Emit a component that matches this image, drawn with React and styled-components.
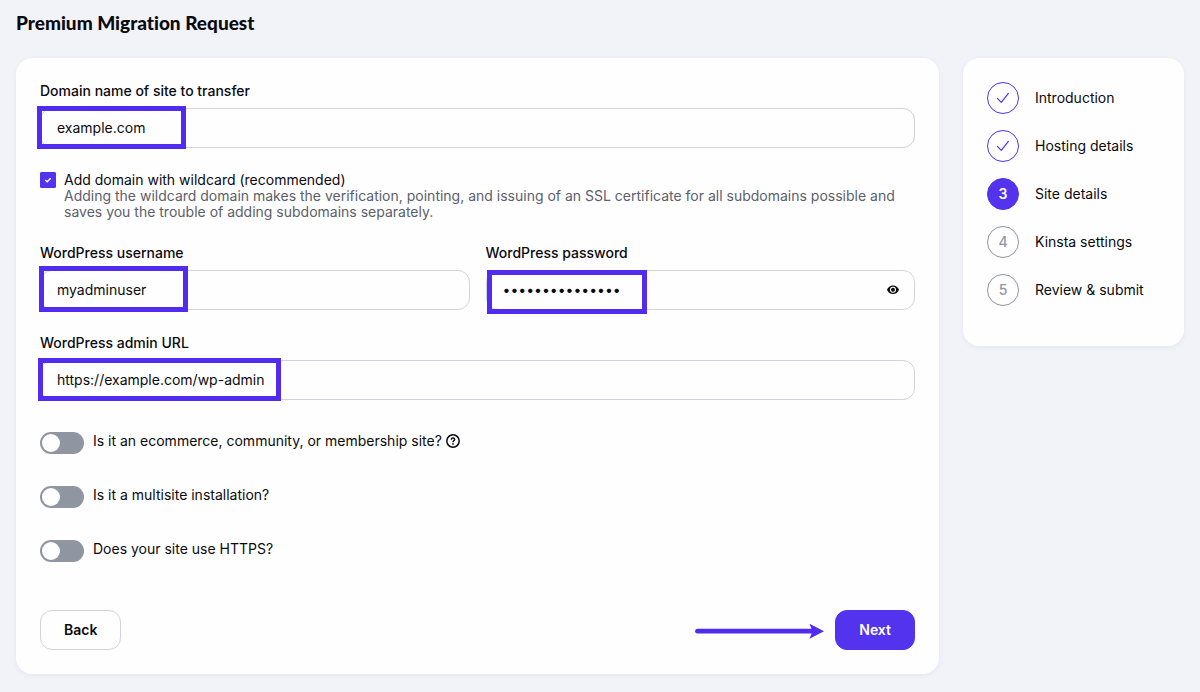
import { useState } from "react";
import styled, { createGlobalStyle } from "styled-components";

const GlobalStyle = createGlobalStyle`
  :root {
    --purple: #5333ed;
    --mark: #512bf0;
    --black: #0a0a0f;
    --grey-1: #5c5f6b;
    --grey-2: #9095a2;
    --border: #d0d3df;
    --body: 400 14px/16px Inter, "Liberation Sans", sans-serif;
    --body-medium: 500 14px/18px Inter, "Liberation Sans", sans-serif;
  }
  * {
    box-sizing: border-box;
  }
  body {
    margin: 0;
    min-height: 100vh;
    background-color: #f2f3f9;
    color: var(--black);
    font: var(--body);
  }
`;

const Page = styled.div`
  padding: 8px 16px 18px;
`;

const Title = styled.h1`
  margin: 0 0 20px;
  font: 900 19px/30px Lato, "Liberation Sans", sans-serif;
  font-variant-ligatures: none;
`;

const Columns = styled.div`
  display: grid;
  grid-template-columns: minmax(0, 1fr) 221px;
  align-items: start;
  gap: 24px;
`;

const Card = styled.section`
  padding: 24px;
  border-radius: 16px;
  background-color: #fefefe;
  box-shadow: 0 1px 4px rgba(60, 60, 120, 0.08);
`;

const Form = styled.form`
  display: flex;
  flex-direction: column;
  gap: 24px;
`;

const FieldRow = styled.div`
  display: grid;
  grid-template-columns: 1fr 1fr;
  gap: 16px;
`;

const FieldStyled = styled.div`
  display: flex;
  flex-direction: column;
  gap: 8px;
  .label {
    font: var(--body-medium);
  }
  .control {
    position: relative;
  }
`;

const Input = styled.input`
  display: block;
  width: 100%;
  height: 40px;
  padding: 0 16px 2px;
  border: 1px solid var(--border);
  border-radius: 12px;
  background-color: transparent;
  color: var(--black);
  font: var(--body);
  outline: none;
`;

const Mark = styled.span`
  position: absolute;
  top: ${({ $top }) => $top}px;
  left: ${({ $left }) => $left}px;
  width: ${({ $width }) => $width}px;
  height: ${({ $height }) => $height}px;
  border: 5px solid var(--mark);
  pointer-events: none;
`;

const EyeButton = styled.button`
  position: absolute;
  top: 12px;
  right: 14px;
  display: flex;
  padding: 0;
  border: none;
  background: none;
  color: var(--black);
`;

const CheckRow = styled.div`
  display: grid;
  grid-template-columns: 16px 1fr;
  column-gap: 8px;
  .box {
    position: relative;
    height: 16px;
  }
  .box input {
    appearance: none;
    display: block;
    width: 16px;
    height: 16px;
    margin: 0;
    border: 1px solid var(--purple);
    border-radius: 1px;
  }
  .box input:checked {
    background-color: var(--purple);
  }
  .box svg {
    position: absolute;
    inset: 0;
    pointer-events: none;
  }
  .hint {
    grid-column: 2;
    margin: 0;
    color: var(--grey-1);
  }
`;

const Toggles = styled.div`
  display: flex;
  flex-direction: column;
  gap: 32px;
  margin-top: 8px;
`;

const ToggleRow = styled.div`
  display: flex;
  align-items: flex-start;
  height: 22px;
  label {
    margin: 0 4px 0 9px;
    line-height: 18px;
  }
`;

const Switch = styled.input`
  appearance: none;
  display: flex;
  width: 44px;
  height: 22px;
  margin: 0;
  padding: 2px;
  border-radius: 11px;
  background-color: var(--grey-2);
  &::before {
    content: "";
    width: 18px;
    height: 18px;
    border-radius: 50%;
    background-color: #fefefe;
  }
  &:checked {
    justify-content: flex-end;
    background-color: var(--purple);
  }
`;

const HelpButton = styled.button`
  display: flex;
  padding: 2px 0 0;
  border: none;
  background: none;
  color: var(--black);
`;

const Footer = styled.div`
  display: flex;
  align-items: center;
  justify-content: space-between;
  margin-top: 24px;
  .next {
    display: flex;
    align-items: center;
    gap: 10px;
  }
`;

const Button = styled.button`
  height: 40px;
  padding: 0 23px;
  border: 1px solid ${({ $primary }) => ($primary ? "var(--purple)" : "var(--border)")};
  border-radius: 12px;
  background-color: ${({ $primary }) => ($primary ? "var(--purple)" : "transparent")};
  color: ${({ $primary }) => ($primary ? "#fff" : "var(--black)")};
  font: var(--body-medium);
  font-weight: 600;
`;

const Steps = styled.ol`
  margin: 0;
  padding: 0;
  list-style: none;
`;

const Step = styled.li`
  display: flex;
  align-items: center;
  gap: 16px;
  margin-bottom: 16px;
  .circle {
    display: flex;
    align-items: center;
    justify-content: center;
    width: 32px;
    height: 32px;
    border: 1px solid ${({ $state }) => ($state === "todo" ? "var(--grey-2)" : "var(--purple)")};
    border-radius: 50%;
    background-color: ${({ $state }) => ($state === "current" ? "var(--purple)" : "transparent")};
    color: ${({ $state }) => ({ done: "var(--purple)", current: "#fff", todo: "var(--grey-2)" })[$state]};
    font: var(--body-medium);
    font-weight: ${({ $state }) => ($state === "current" ? 600 : 500)};
  }
`;

const steps = [
  { name: "Introduction", state: "done" },
  { name: "Hosting details", state: "done" },
  { name: "Site details", state: "current" },
  { name: "Kinsta settings", state: "todo" },
  { name: "Review & submit", state: "todo" },
];

function CheckIcon() {
  return (
    <svg width="14" height="14" viewBox="0 0 14 14" fill="none" stroke="currentColor" strokeWidth="1.2">
      <path d="M1.4 7.4 5.3 11.4 12.4 2.4" strokeLinecap="round" strokeLinejoin="round" />
    </svg>
  );
}

function EyeIcon() {
  return (
    <svg width="16" height="16" viewBox="0 0 16 16">
      <path
        d="M8 3.4C5.2 3.4 3 5 2 7.7c1 2.7 3.2 4.3 6 4.3s5-1.6 6-4.3C13 5 10.8 3.4 8 3.4Z"
        fill="currentColor"
      />
      <circle cx="8" cy="7.7" r="2.5" fill="none" stroke="#fefefe" strokeWidth="1.1" />
    </svg>
  );
}

function HelpIcon() {
  return (
    <svg width="14" height="14" viewBox="0 0 14 14" fill="none" stroke="currentColor">
      <circle cx="7" cy="7" r="6.2" strokeWidth="1.5" />
      <path d="M5.3 5.7C5.3 4.6 6 4 7 4s1.7.6 1.7 1.5C8.7 6.6 7 6.7 7 8.2" strokeWidth="1.4" />
      <circle cx="7" cy="9.9" r="0.85" fill="currentColor" stroke="none" />
    </svg>
  );
}

function Arrow() {
  return (
    <svg width="130" height="18" viewBox="0 0 130 18" fill="var(--mark)" aria-hidden="true">
      <path d="M2.5 10.2H118" stroke="var(--mark)" strokeWidth="4.8" strokeLinecap="round" />
      <path d="M114.5 2.7 129 10.2 114.5 17.7 117.5 10.2Z" />
    </svg>
  );
}

function Field({ id, label, mark, children, ...input }) {
  return (
    <FieldStyled>
      <label className="label" htmlFor={id}>
        {label}
      </label>
      <div className="control">
        <Input id={id} type="text" {...input} />
        <Mark $left={mark[0]} $top={mark[1]} $width={mark[2]} $height={mark[3]} />
        {children}
      </div>
    </FieldStyled>
  );
}

function Toggle({ id, label, children }) {
  return (
    <ToggleRow>
      <Switch id={id} type="checkbox" role="switch" />
      <label htmlFor={id}>{label}</label>
      {children}
    </ToggleRow>
  );
}

function App() {
  const [visible, setVisible] = useState(false);

  return (
    <Page>
      <GlobalStyle />
      <Title>Premium Migration Request</Title>
      <Columns>
        <Card>
          <Form>
            <Field
              id="domain"
              label="Domain name of site to transfer"
              defaultValue="example.com"
              mark={[-3, -2, 149, 43]}
            />
            <CheckRow>
              <div className="box">
                <input id="wildcard" type="checkbox" defaultChecked />
                <svg width="16" height="16" viewBox="0 0 16 16" fill="none" stroke="#fff" strokeWidth="1.5">
                  <path d="M5.3 8 7.2 9.7 10.7 6.3" />
                </svg>
              </div>
              <label htmlFor="wildcard">Add domain with wildcard (recommended)</label>
              <p className="hint">
                Adding the wildcard domain makes the verification, pointing, and issuing of an SSL
                certificate for all subdomains possible and saves you the trouble of adding
                subdomains separately.
              </p>
            </CheckRow>
            <FieldRow>
              <Field
                id="username"
                label="WordPress username"
                defaultValue="myadminuser"
                mark={[-1, -4, 149, 46]}
              />
              <Field
                id="password"
                label="WordPress password"
                type={visible ? "text" : "password"}
                defaultValue="mysitepassword1"
                mark={[1, 0, 160, 44]}
              >
                <EyeButton type="button" aria-label="Show password" onClick={() => setVisible(!visible)}>
                  <EyeIcon />
                </EyeButton>
              </Field>
            </FieldRow>
            <Field
              id="admin-url"
              label="WordPress admin URL"
              defaultValue="https://example.com/wp-admin"
              mark={[-2, -2, 243, 43]}
            />
            <Toggles>
              <Toggle id="ecommerce" label="Is it an ecommerce, community, or membership site?">
                <HelpButton type="button" aria-label="Help">
                  <HelpIcon />
                </HelpButton>
              </Toggle>
              <Toggle id="multisite" label="Is it a multisite installation?" />
              <Toggle id="https" label="Does your site use HTTPS?" />
            </Toggles>
            <Footer>
              <Button type="button">Back</Button>
              <div className="next">
                <Arrow />
                <Button type="button" $primary>
                  Next
                </Button>
              </div>
            </Footer>
          </Form>
        </Card>
        <Card>
          <Steps>
            {steps.map(({ name, state }, i) => (
              <Step key={name} $state={state}>
                <span className="circle">{state === "done" ? <CheckIcon /> : i + 1}</span>
                {name}
              </Step>
            ))}
          </Steps>
        </Card>
      </Columns>
    </Page>
  );
}

export default App;
